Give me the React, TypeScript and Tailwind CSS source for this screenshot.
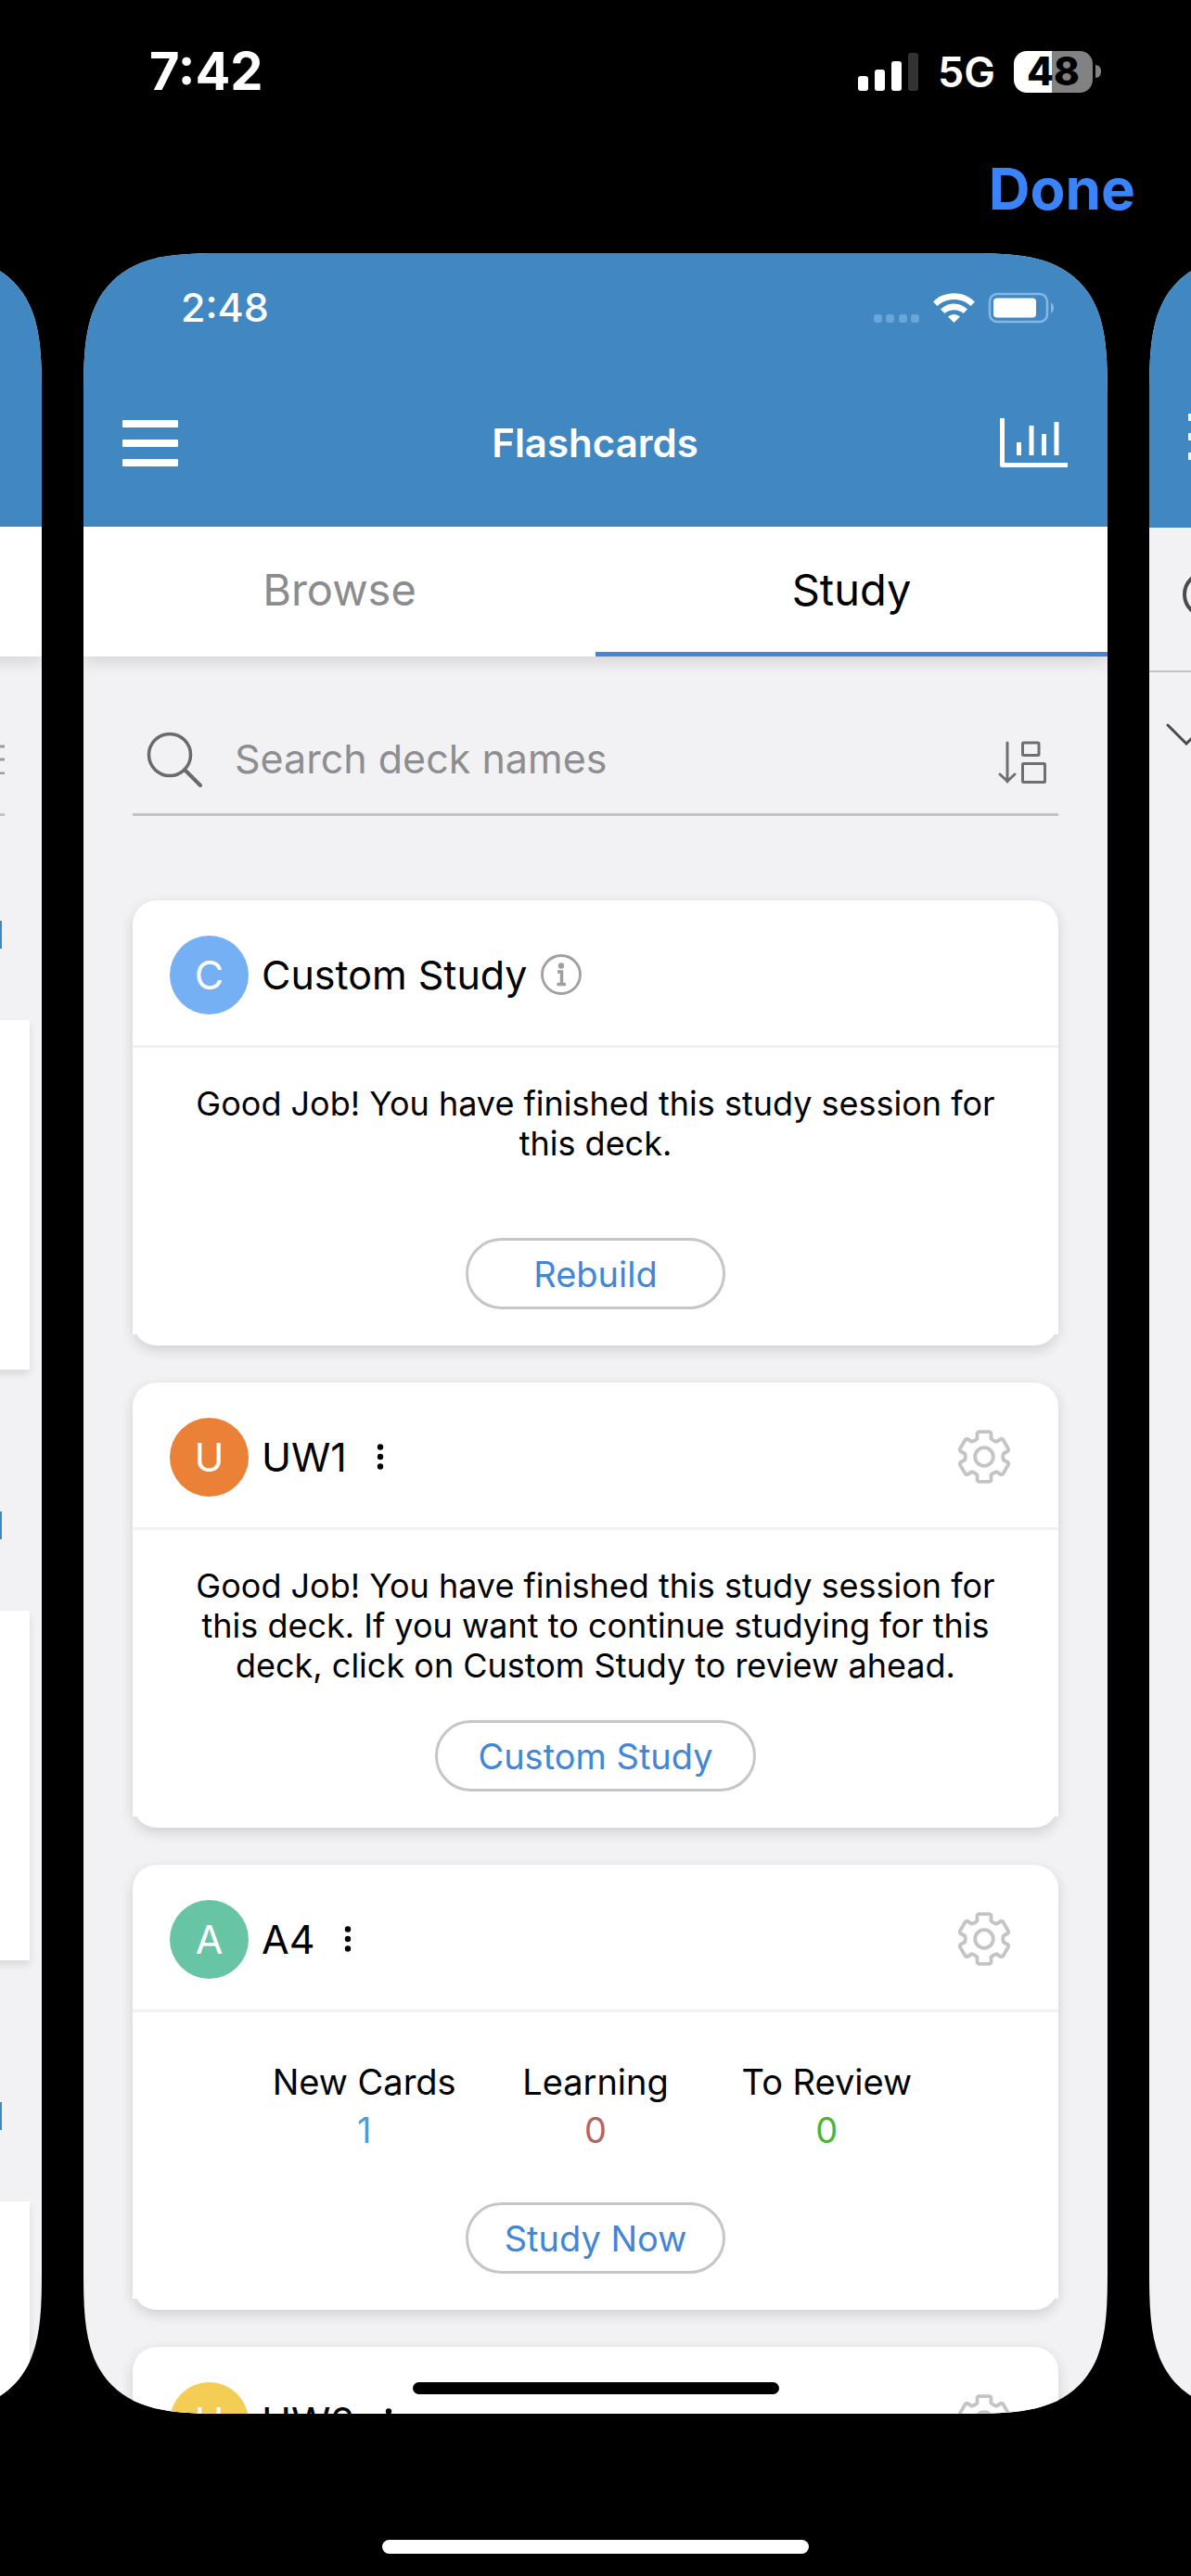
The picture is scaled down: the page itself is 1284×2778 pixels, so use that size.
import React, { useState } from "react";

type Deck = {
  letter: string;
  name: string;
  color: string;
  custom?: boolean;
  message?: string;
  stats?: { label: string; value: number; color: string }[];
  action?: string;
  wideAction?: boolean;
};

const decks: Deck[] = [
  {
    letter: "C",
    name: "Custom Study",
    color: "bg-[#76b0f4]",
    custom: true,
    message: "Good Job! You have finished this study session for this deck.",
    action: "Rebuild",
  },
  {
    letter: "U",
    name: "UW1",
    color: "bg-[#ea8136]",
    message:
      "Good Job! You have finished this study session for this deck. If you want to continue studying for this deck, click on Custom Study to review ahead.",
    action: "Custom Study",
    wideAction: true,
  },
  {
    letter: "A",
    name: "A4",
    color: "bg-[#67c5a5]",
    stats: [
      { label: "New Cards", value: 1, color: "text-[#4a9ed9]" },
      { label: "Learning", value: 0, color: "text-[#b56464]" },
      { label: "To Review", value: 0, color: "text-[#4cb533]" },
    ],
    action: "Study Now",
  },
  { letter: "U", name: "UW2", color: "bg-[#f4cd54]" },
];

const toothProfile: [number, number][] = [
  [-7.5, -19.5],
  [-7.5, -25.5],
  [-6, -26.8],
  [6, -26.8],
  [7.5, -25.5],
  [7.5, -19.5],
  [10.6, -17.2],
];

const gearPoints = [0, 60, 120, 180, 240, 300]
  .flatMap((deg) => {
    const a = (deg * Math.PI) / 180;
    return toothProfile.map(
      ([x, y]) =>
        `${(x * Math.cos(a) - y * Math.sin(a)).toFixed(2)},${(x * Math.sin(a) + y * Math.cos(a)).toFixed(2)}`,
    );
  })
  .join(" ");

function GearIcon() {
  return (
    <svg viewBox="-30 -30 60 60" className="size-[60px]" fill="none" stroke="#c4c4c4" strokeWidth="3.800" strokeLinejoin="round">
      <polygon points={gearPoints} />
      <circle r="9.800" />
    </svg>
  );
}

function MenuIcon() {
  return (
    <svg viewBox="0 0 60 50" className="h-[50px] w-[60px]" fill="#fff">
      <rect width="60" height="8" rx="1" />
      <rect y="21" width="60" height="8" rx="1" />
      <rect y="42" width="60" height="8" rx="1" />
    </svg>
  );
}

function ChartIcon() {
  return (
    <svg viewBox="0 0 73 53" className="h-[53px] w-[73px]" fill="none" stroke="#fff" strokeWidth="5">
      <path d="M2.5 0V50.5H73" strokeLinejoin="round" />
      <path d="M20.5 26V40M34 8V40M47.500 17V40M61 4V40" />
    </svg>
  );
}

function SearchIcon() {
  return (
    <svg viewBox="0 0 60 60" className="size-[60px] shrink-0" fill="none" stroke="#6a6a6a" strokeWidth="3.500" strokeLinecap="round">
      <circle cx="25" cy="25" r="22.500" />
      <path d="M41 41L58 58" strokeWidth="4" />
    </svg>
  );
}

function SortIcon() {
  return (
    <svg viewBox="0 0 52 46" className="h-[46px] w-[52px]" fill="none" stroke="#6f6f71" strokeWidth="3" strokeLinecap="round" strokeLinejoin="round">
      <path d="M10 2V44M2 36L10 43.500L18 36" />
      <rect x="26.500" y="2" width="17.500" height="13.500" rx="1" />
      <rect x="26.500" y="24.500" width="24" height="20" rx="1" />
    </svg>
  );
}

function InfoIcon() {
  return (
    <svg viewBox="0 0 44 44" className="size-[44px]" fill="none" stroke="#a0a0a0">
      <circle cx="22" cy="22" r="20.500" strokeWidth="2.800" />
      <circle cx="22" cy="12.500" r="3.200" fill="#a0a0a0" stroke="none" />
      <path d="M18 19H22.500V32M17.500 32.500H27" strokeWidth="3.500" />
    </svg>
  );
}

function DotsIcon() {
  return (
    <svg viewBox="0 0 8 28" className="h-[28px] w-[8px]" fill="#000">
      <circle cx="4" cy="3.500" r="3.200" />
      <circle cx="4" cy="14" r="3.200" />
      <circle cx="4" cy="24.500" r="3.200" />
    </svg>
  );
}

function PhoneStatus() {
  return (
    <header className="flex h-[142px] shrink-0 items-center justify-between pt-3 pr-[97px] pl-[161px] text-white">
      <time className="text-[56px] leading-none font-bold">7:42</time>
      <div className="flex items-center">
        <svg viewBox="0 0 65 41" className="h-[41px] w-[65px]" fill="#fff" aria-label="Signal">
          <rect y="25" width="11" height="16" rx="3" />
          <rect x="18" y="18" width="11" height="23" rx="3" />
          <rect x="36" y="9" width="11" height="32" rx="3" />
          <rect x="54" width="11" height="41" rx="3" fill="#333" />
        </svg>
        <span className="ml-[21px] text-[45px] leading-none font-semibold">5G</span>
        <div className="ml-5 flex items-center gap-[3px]">
          <div className="flex h-[45px] w-[85px] items-center justify-center rounded-[14px] bg-linear-to-r from-white from-48% to-[#828282] to-48% text-[42px] leading-none font-extrabold text-black">
            48
          </div>
          <div className="h-[14px] w-[6px] rounded-r-full bg-[#828282]" />
        </div>
      </div>
    </header>
  );
}

function ScreenStatus() {
  return (
    <div className="flex h-[118px] items-center justify-between pr-[57px] pb-px pl-[105px]">
      <time className="text-[43px] leading-none font-medium">2:48</time>
      <svg viewBox="0 0 195 34" className="h-[34px] w-[195px]" fill="#fff" aria-label="Status">
        <g fill="#69a5d6">
          <rect x="0" y="24" width="9" height="9" rx="3" />
          <rect x="13" y="24" width="9" height="9" rx="3" />
          <rect x="27" y="24" width="9" height="9" rx="3" />
          <rect x="40" y="24" width="9" height="9" rx="3" />
        </g>
        <path d="M64 10.500C76 -2 97 -2 109 10.500L104.500 15C95 5.500 78 5.500 68.500 15Z" />
        <path d="M72 18.500C80 10.500 93 10.500 101 18.500L96.500 23C91 18 82 18 76.500 23Z" />
        <path d="M80 26.500C84 23 89 23 93 26.500L86.500 33Z" />
        <rect x="125" y="2" width="62" height="30" rx="8" fill="none" stroke="#86b7e0" strokeWidth="2.500" />
        <rect x="129" y="6.500" width="46" height="21" rx="4" />
        <path d="M191 11.500C195 13 195 21 191 22.500Z" fill="#86b7e0" />
      </svg>
    </div>
  );
}

const screenClass =
  "flex w-[calc(100%-180px)] shrink-0 flex-col overflow-hidden rounded-[105px] bg-[#f2f2f4] supports-[corner-shape:squircle]:rounded-[155px] supports-[corner-shape:squircle]:[corner-shape:superellipse(1.65)]";

function PreviousScreen() {
  return (
    <section className={screenClass} aria-hidden="true">
      <div className="h-[295px] shrink-0 bg-[#4188c3]" />
      <div className="h-[140px] shrink-0 bg-white shadow-[0_6px_16px_rgba(0,0,0,0.12)]" />
      <div className="mt-[52px] mr-10 flex h-[120px] shrink-0 items-center justify-end border-b-3 border-[#c2c2c4]">
        <svg viewBox="0 0 40 33" className="h-[33px] w-[40px]" stroke="#9b9b9b" strokeWidth="3">
          <path d="M0 3H40M0 17H40M0 32H40" />
        </svg>
      </div>
      {[0, 1, 2].map((i) => (
        <div key={i} className={i === 0 ? "shrink-0 pt-[113px]" : "shrink-0 pt-[153px]"}>
          <div className="mr-[43px] ml-auto h-[30px] w-1 bg-[#4188c3]" />
          <div className="mt-[77px] mr-[13px] h-[377px] bg-white shadow-[0_5px_8px_rgba(0,0,0,0.1)]" />
        </div>
      ))}
    </section>
  );
}

function NextScreen() {
  return (
    <section className={screenClass} aria-hidden="true">
      <div className="flex h-[296px] shrink-0 items-end bg-[#4188c3] pb-[73px] pl-[42px]">
        <MenuIcon />
      </div>
      <div className="flex h-[156px] shrink-0 items-center border-b-2 border-[#c2c2c4] pl-9">
        <svg viewBox="0 0 60 60" className="size-[60px]" fill="none" stroke="#4a4a4a" strokeWidth="4" strokeLinecap="round">
          <circle cx="25" cy="25" r="23" />
          <path d="M41 41L58 58" />
        </svg>
      </div>
      <svg viewBox="0 0 44 24" className="mt-[55px] ml-[18px] h-[24px] w-[44px]" fill="none" stroke="#4a4a4a" strokeWidth="3" strokeLinecap="round">
        <path d="M2 2L22 22L42 2" />
      </svg>
    </section>
  );
}

function DeckCard({ deck }: { deck: Deck }) {
  return (
    <article className="shrink-0 rounded-[26px] bg-white pb-3 shadow-[0_5px_14px_rgba(30,30,50,0.16)]">
      <div className="flex h-[159px] items-center border-b-3 border-[#f1f1f3] pt-1 pr-[50px] pl-10">
        <div
          className={`flex size-[85px] shrink-0 items-center justify-center rounded-full text-[43px] leading-none text-white ${deck.color}`}
        >
          {deck.letter}
        </div>
        <h2 className="ml-[14px] text-[43px] leading-[54px]">{deck.name}</h2>
        {deck.custom ? (
          <button type="button" aria-label="About custom study" className="ml-[14px]">
            <InfoIcon />
          </button>
        ) : (
          <>
            <button type="button" aria-label={`${deck.name} options`} className="ml-8">
              <DotsIcon />
            </button>
            <button type="button" aria-label={`${deck.name} settings`} className="ml-auto">
              <GearIcon />
            </button>
          </>
        )}
      </div>
      <div className="flex h-[309px] flex-col items-center bg-white px-[55px] pt-[39px]">
        <div className="min-h-[129px] w-full">
          {deck.message && <p className="text-center text-[36px] leading-[43px]">{deck.message}</p>}
          {deck.stats && (
            <dl className="mx-auto grid w-3/4 min-w-[748px] grid-cols-3 pt-[10px] text-center text-[38px] leading-[52px]">
              {deck.stats.map((s) => (
                <div key={s.label}>
                  <dt>{s.label}</dt>
                  <dd className={s.color}>{s.value}</dd>
                </div>
              ))}
            </dl>
          )}
        </div>
        {deck.action && (
          <button
            type="button"
            className={`mt-[37px] h-[77px] rounded-full border-3 border-[#c6c6c6] px-9 text-[38px] leading-none text-[#4286d8] ${deck.wideAction ? "min-w-[346px]" : "min-w-[280px]"}`}
          >
            {deck.action}
          </button>
        )}
      </div>
    </article>
  );
}

function StudyScreen() {
  const [tab, setTab] = useState("Study");
  const [query, setQuery] = useState("");
  return (
    <main className={`${screenClass} relative`}>
      <div className="h-[295px] shrink-0 bg-[#4188c3] text-white">
        <ScreenStatus />
        <div className="flex h-[177px] items-center justify-between pr-[43px] pb-1 pl-[42px]">
          <button type="button" aria-label="Menu" className="flex w-[73px]">
            <MenuIcon />
          </button>
          <h1 className="text-[42px] leading-none font-semibold">Flashcards</h1>
          <button type="button" aria-label="Statistics">
            <ChartIcon />
          </button>
        </div>
      </div>
      <nav className="z-10 grid h-[140px] shrink-0 grid-cols-2 bg-white shadow-[0_6px_16px_rgba(0,0,0,0.12)]">
        {["Browse", "Study"].map((name) => (
          <button
            key={name}
            type="button"
            onClick={() => setTab(name)}
            className={
              tab === name
                ? "border-b-5 border-[#4286d8] text-[47px] leading-none text-black"
                : "border-b-5 border-transparent text-[47px] leading-none text-[#8c8c8c]"
            }
          >
            {name}
          </button>
        ))}
      </nav>
      <form className="mx-[53px] mt-[52px] flex h-[120px] shrink-0 items-center border-b-3 border-[#c2c2c4] pr-[13px] pl-[15px]">
        <SearchIcon />
        <input
          type="text"
          aria-label="Search deck names"
          placeholder="Search deck names"
          value={query}
          onChange={(e) => setQuery(e.target.value)}
          className="ml-[35px] min-w-0 flex-1 bg-transparent text-[43px] outline-none placeholder:text-[#8e8e90]"
        />
        <button type="button" aria-label="Sort decks" className="pt-[6px]">
          <SortIcon />
        </button>
      </form>
      <div className="mx-[53px] mt-[91px] flex flex-col gap-10">
        {decks.map((deck) => (
          <DeckCard key={deck.name} deck={deck} />
        ))}
      </div>
      <div className="absolute inset-x-0 bottom-[21px] mx-auto h-[13px] w-[395px] rounded-full bg-black" />
    </main>
  );
}

export default function App() {
  return (
    <div className="flex h-screen flex-col overflow-hidden bg-black font-['Inter',sans-serif] text-black">
      <PhoneStatus />
      <div className="flex h-[131px] shrink-0 items-center justify-end pr-[60px] pb-2">
        <button type="button" className="text-[62px] leading-none font-bold text-[#3b83f9]">
          Done
        </button>
      </div>
      <div className="flex min-h-0 flex-1 justify-center gap-[45px] overflow-hidden">
        <PreviousScreen />
        <StudyScreen />
        <NextScreen />
      </div>
      <footer className="flex h-[175px] shrink-0 items-end justify-center pb-6">
        <div className="h-[15px] w-[460px] rounded-full bg-white" />
      </footer>
    </div>
  );
}
